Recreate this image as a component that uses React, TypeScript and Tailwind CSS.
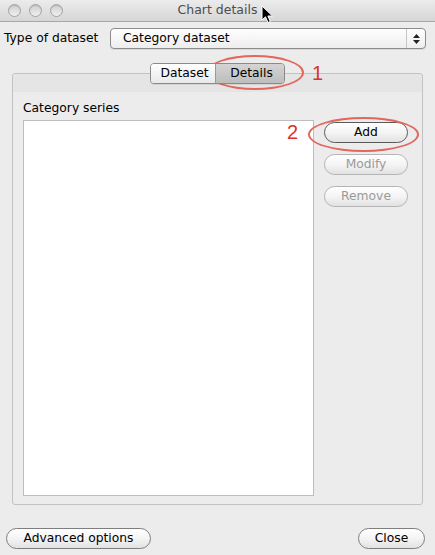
import React from "react"

const font = { fontFamily: '"DejaVu Sans", "Liberation Sans", sans-serif' }

function Light() {
  return (
    <div className="w-[13px] h-[13px] rounded-full border border-[#a3a3a3] bg-gradient-to-b from-[#cfcfcf] to-[#f0f0f0] shadow-[inset_0_1px_1px_rgba(0,0,0,0.12)]" />
  )
}

function PillButton({ label, disabled, strong, className = "" }: { label: string; disabled?: boolean; strong?: boolean; className?: string }) {
  const border = strong ? "border-[#5a5a5a]" : disabled ? "border-[#b4b4b4]" : "border-[#7e7e7e]"
  const text = disabled ? "text-[#9a9a9a]" : "text-black"
  return (
    <div
      className={`h-[21px] rounded-full border ${border} ${text} bg-gradient-to-b from-white via-[#f4f4f4] to-[#e2e2e2] flex items-center justify-center text-[12.3px] leading-none ${className}`}
    >
      {label}
    </div>
  )
}

function Cursor() {
  return (
    <svg className="absolute left-[261px] top-[5px]" width="14" height="20" viewBox="0 0 14 20">
      <path d="M1 1 L1 15 L4.5 11.8 L7 17.5 L9.3 16.5 L6.9 11 L11.5 11 Z" fill="#000" stroke="#fff" strokeWidth="1" strokeLinejoin="round" />
    </svg>
  )
}

export default function App() {
  return (
    <div className="relative w-[435px] h-[555px] bg-[#ececec] flex flex-col overflow-hidden" style={font}>
      {/* title bar */}
      <div className="h-[22px] shrink-0 relative flex items-center bg-gradient-to-b from-[#ececec] to-[#d6d6d6] border-b border-[#a8a8a8]">
        <div className="flex gap-[8px] pl-[8px]">
          <Light />
          <Light />
          <Light />
        </div>
        <div className="absolute inset-0 flex items-center justify-center text-[12.5px] text-[#4d4d4d]">Chart details</div>
      </div>

      {/* type row */}
      <div className="flex items-center pt-[6px] shrink-0">
        <div className="w-[110px] pl-[4px] text-[12.3px] text-black">Type of dataset</div>
        <div className="w-[316px] h-[21px] rounded-[4px] border border-[#8c8c8c] bg-gradient-to-b from-white to-[#ededed] flex items-center shadow-[0_1px_0_rgba(0,0,0,0.08)]">
          <div className="flex-1 pl-[12px] text-[12.3px] text-black">Category dataset</div>
          <div className="w-[19px] h-full border-l border-[#c4c4c4] flex flex-col items-center justify-center gap-[2px]">
            <svg width="7" height="4" viewBox="0 0 7 4"><path d="M3.5 0 L7 4 L0 4 Z" fill="#222" /></svg>
            <svg width="7" height="4" viewBox="0 0 7 4"><path d="M0 0 L7 0 L3.5 4 Z" fill="#222" /></svg>
          </div>
        </div>
      </div>

      {/* tabs */}
      <div className="mt-[14px] flex justify-center relative z-10 shrink-0">
        <div className="ml-[-1px] flex h-[21px] rounded-[4px] border border-[#8a8a8a] overflow-hidden text-[12.3px] shadow-[0_1px_0_rgba(0,0,0,0.08)]">
          <div className="w-[65px] pl-[10px] overflow-hidden whitespace-nowrap flex items-center bg-gradient-to-b from-white to-[#e9e9e9] border-r border-[#9a9a9a]">
            Dataset
          </div>
          <div className="w-[68px] flex items-center justify-center pl-[4px] bg-gradient-to-b from-[#d4d4d4] to-[#bdbdbd]">Details</div>
        </div>
      </div>

      {/* panel */}
      <div className="mx-[12px] -mt-[11px] flex-1 flex flex-col rounded-[3px] border border-[#c2c2c2] bg-[#ececec]">
        <div className="h-[18px] shrink-0 bg-[#e5e5e5] rounded-t-[3px]" />
        <div className="flex-1 flex flex-col pl-[10px] pr-[14px] pb-[8px] pt-[8px]">
          <div className="h-[16px] flex items-center text-[12.3px] text-black">Category series</div>
          <div className="flex-1 flex mt-[4px]">
            <div className="flex-1 bg-white border border-[#bdbdbd]" />
            <div className="w-[84px] ml-[10px] pt-[2px] flex flex-col gap-[11px]">
              <PillButton label="Add" strong />
              <PillButton label="Modify" disabled />
              <PillButton label="Remove" disabled />
            </div>
          </div>
        </div>
      </div>

      {/* bottom buttons */}
      <div className="h-[50px] shrink-0 flex items-start justify-between pt-[23px] pl-[6px] pr-[10px]">
        <PillButton label="Advanced options" className="w-[145px]" />
        <PillButton label="Close" className="w-[67px]" />
      </div>

      {/* annotations */}
      <div className="absolute left-[206px] top-[55px] w-[98px] h-[35px] rounded-[50%] border-2 border-[#e3675c]" />
      <div className="absolute left-[312px] top-[63px] text-[20px] leading-none text-[#d9342a]" style={{ fontFamily: '"Liberation Sans", sans-serif' }}>1</div>
      <div className="absolute left-[308px] top-[117px] w-[111px] h-[35px] rounded-[50%] border-2 border-[#e3675c]" />
      <div className="absolute left-[287px] top-[122px] text-[20px] leading-none text-[#d9342a]" style={{ fontFamily: '"Liberation Sans", sans-serif' }}>2</div>
      <Cursor />
    </div>
  )
}
